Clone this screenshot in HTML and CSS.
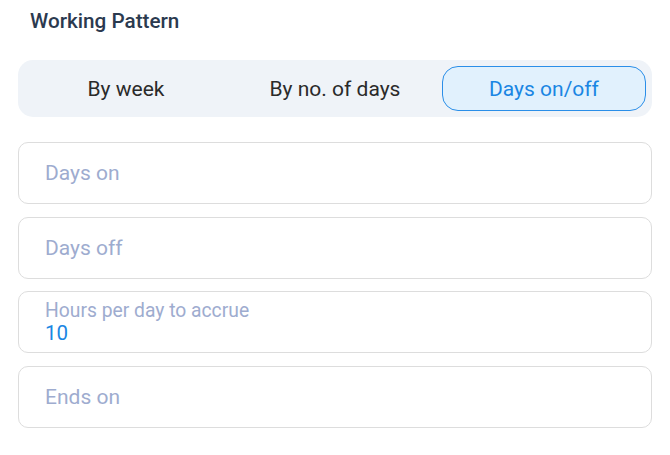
FILE: index.html
```html
<!DOCTYPE html>
<html>
<head>
<meta charset="utf-8">
<link rel="stylesheet" href="styles.css">
</head>
<body>
<div class="page">
  <h2 class="title">Working Pattern</h2>
  <div class="segmented">
    <div class="seg">By week</div>
    <div class="seg">By no. of days</div>
    <div class="seg active">Days on/off</div>
  </div>
  <div class="fields">
    <div class="field"><span class="placeholder">Days on</span></div>
    <div class="field"><span class="placeholder">Days off</span></div>
    <div class="field filled"><span class="label">Hours per day to accrue</span><span class="value">10</span></div>
    <div class="field"><span class="placeholder">Ends on</span></div>
  </div>
</div>
</body>
</html>
```
FILE: styles.css
```css
* { box-sizing: border-box; }
html, body { margin: 0; padding: 0; background: #ffffff; }
body { font-family: Roboto, "Liberation Sans", sans-serif; }
.page { padding: 8px 18px 0 18px; width: 670px; }
.title {
  margin: 0 0 0 12px;
  font-size: 20.7px;
  font-weight: 500;
  color: #2b3a4f;
  line-height: 26px;
}
.segmented {
  margin-top: 26px;
  width: 634px;
  height: 57px;
  background: #eff3f8;
  border-radius: 15px;
  padding: 6px;
  display: grid;
  grid-template-columns: 1fr 1fr 1fr;
  gap: 5px;
}
.seg {
  display: flex;
  align-items: center;
  justify-content: center;
  font-size: 21px;
  color: #2a2a2a;
  border-radius: 16px;
  border: 1.5px solid transparent;
  height: 45px;
}
.seg.active {
  background: #e1f1fd;
  border-color: #2a8ee8;
  color: #1a86e3;
}
.fields {
  margin-top: 25px;
  width: 634px;
  display: flex;
  flex-direction: column;
  gap: 12.5px;
}
.field {
  height: 62px;
  border: 1.5px solid #dddddd;
  border-radius: 10px;
  padding: 0 26px;
  display: flex;
  flex-direction: column;
  justify-content: center;
}
.placeholder {
  font-size: 21px;
  color: #9eaccf;
  line-height: 24px;
}
.filled { justify-content: flex-start; padding-top: 8px; }
.label {
  font-size: 19.3px;
  color: #9eaccf;
  line-height: 22px;
}
.value {
  font-size: 20.5px;
  color: #1a86e3;
  line-height: 22px;
}
```
